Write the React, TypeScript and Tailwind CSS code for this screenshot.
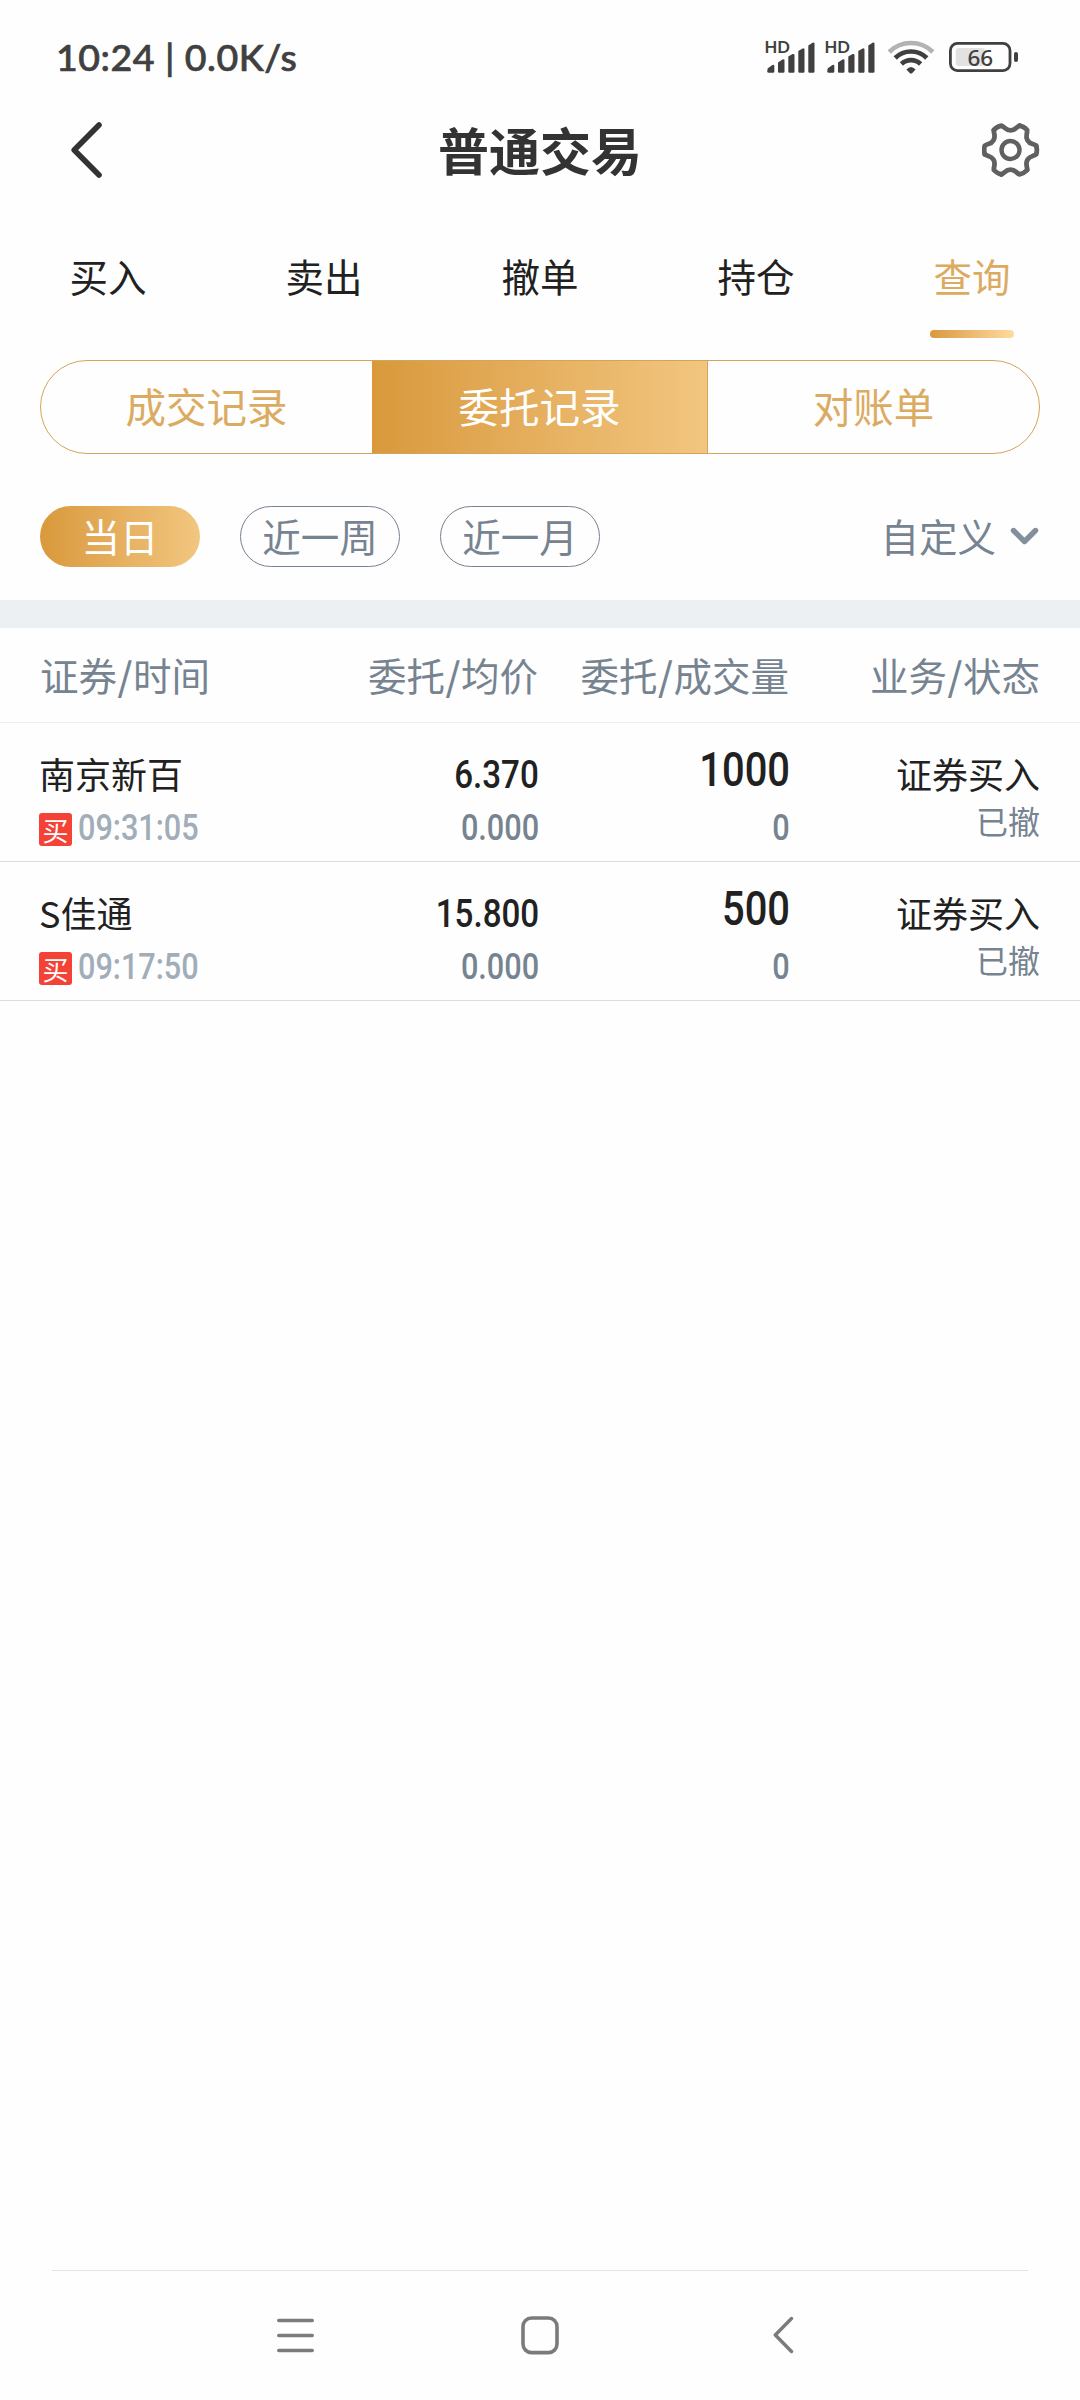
import React from "react";

const CJK = "font-['Noto_Sans_CJK_SC',sans-serif]";

function Signal() {
  return (
    <svg width="52" height="50" viewBox="0 -8 52 50" fill="#404040">
      <text x="-0.6" y="12.7" fontSize="16.2" fontWeight="700" fontFamily="Lato, sans-serif" textLength="25.4" lengthAdjust="spacingAndGlyphs">
        HD
      </text>
      <path d="M2.6 28.6 L7 25.2 Q9.3 24 9.3 26 V31.4 Q9.3 32.7 8 32.7 H3.7 Q2.3 32.7 2.3 31.2 Z" />
      <path d="M13 22.4 L17.5 19.6 Q19.5 18.8 19.5 20.8 V31.4 Q19.5 32.7 18.3 32.7 H14.2 Q13 32.7 13 31.4 Z" />
      <path d="M23.3 16.6 L27.6 14.1 Q29.5 13.4 29.5 15.4 V31.4 Q29.5 32.7 28.3 32.7 H24.5 Q23.3 32.7 23.3 31.4 Z" />
      <path d="M33.3 10.9 L37.6 8.4 Q39.5 7.8 39.5 9.8 V31.4 Q39.5 32.7 38.3 32.7 H34.5 Q33.3 32.7 33.3 31.4 Z" />
      <path d="M43.3 5.6 L47.6 2.8 Q49.5 2 49.5 4 V31.4 Q49.5 32.7 48.3 32.7 H44.5 Q43.3 32.7 43.3 31.4 Z" />
    </svg>
  );
}

function Wifi() {
  return (
    <svg width="48" height="34" viewBox="0 0 48 34" fill="none" strokeWidth="4.6">
      <path d="M2.2 12 A31 31 0 0 1 45.8 12" stroke="#b3b3b3" />
      <path d="M8.2 18 A22.5 22.5 0 0 1 39.8 18" stroke="#404040" />
      <path d="M14.4 24 A13.8 13.8 0 0 1 33.6 24" stroke="#404040" />
      <path d="M19.4 29.4 Q24 24.4 28.6 29.4 L25.3 33 Q24 34 22.7 33 Z" fill="#404040" stroke="none" />
    </svg>
  );
}

function Battery() {
  return (
    <svg width="70" height="46" viewBox="0 -8 70 46">
      <rect x="6.8" y="6" width="29" height="18" rx="3" fill="#e2e2e2" />
      <rect x="1.4" y="1.4" width="59.6" height="27.2" rx="7" fill="none" stroke="#404040" strokeWidth="2.8" />
      <rect x="65" y="10" width="4" height="10" rx="2" fill="#404040" />
      <text x="31.3" y="23.5" fontSize="22.5" fontFamily="Noto Sans, sans-serif" fontWeight="500" textAnchor="middle" fill="#404040">
        66
      </text>
    </svg>
  );
}

function Gear() {
  return (
    <svg width="58" height="56" viewBox="-28.5 -28 58 56" fill="none" stroke="#606060" strokeWidth="4.8" strokeLinejoin="round" strokeLinecap="round">
      {[0, 60, 120, 180, 240, 300].map((a) => (
        <path
          key={a}
          transform={`rotate(${a})`}
          d="M9 -24.4 C5.5 -22.8 5 -19.6 0 -19.6 C-5 -19.6 -5.5 -22.8 -9 -24.4 Q-13.6 -23.4 -16.6 -20"
        />
      ))}
      <circle r="9" strokeWidth="4.4" />
    </svg>
  );
}

const tabs = ["买入", "卖出", "撤单", "持仓", "查询"];

const orders = [
  { name: "南京新百", time: "09:31:05", price: "6.370", avg: "0.000", qty: "1000", filled: "0", type: "证券买入", status: "已撤" },
  { name: "S佳通", time: "09:17:50", price: "15.800", avg: "0.000", qty: "500", filled: "0", type: "证券买入", status: "已撤" },
];

const columns = "grid grid-cols-[260px_238px_251px_251px] px-10";
const numRight = "-mr-px block w-max self-end origin-right scale-x-[0.84] font-['Roboto',sans-serif]";

// Column caption such as "证券/时间", with the slash spaced a little wider than the glyph.
function Caption({ a, b }: { a: string; b: string }) {
  return (
    <span>
      {a}
      <span className="px-[0.5px] font-medium">/</span>
      {b}
    </span>
  );
}

export default function App() {
  return (
    <div className={`flex h-[2400px] w-[1080px] flex-col overflow-hidden bg-[#fefefe] text-[#212121] ${CJK}`}>
      <div className="flex h-[114px] shrink-0 items-center justify-between pl-[56px] pr-[61px]">
        <div className="text-[37.5px] leading-[46px] font-medium tracking-[0.5px] whitespace-pre text-[#404040] [-webkit-text-stroke:0.7px_#404040] font-['Lato',sans-serif]">
          10:24 | 0.0K/s
        </div>
        <div className="flex items-center">
          <Signal />
          <div className="w-2" />
          <Signal />
          <div className="w-[10px]" />
          <Wifi />
          <div className="w-[14px]" />
          <Battery />
        </div>
      </div>

      <div className="grid h-[72px] shrink-0 grid-cols-[1fr_auto_1fr] items-center pl-[40px] pr-[40px]">
        <svg className="ml-[30px]" width="59" height="58" viewBox="0 0 59 58" fill="none" stroke="#333" strokeWidth="5.6" strokeLinecap="round" strokeLinejoin="round">
          <path d="M29 4 L4.2 29 L29 54" />
        </svg>
        <h1 className="pb-[2px] text-[51px] leading-[60px] font-bold text-[#333]">普通交易</h1>
        <div className="flex justify-end">
          <Gear />
        </div>
      </div>

      <nav className="grid h-[174px] shrink-0 grid-cols-5 pt-[66px]">
        {tabs.map((t) => (
          <div key={t} className={t === "查询" ? "flex flex-col items-center text-[#dcab62]" : "flex flex-col items-center"}>
            <span className="text-[38.5px] leading-[46px]">{t}</span>
            {t === "查询" && <span className="mt-[32px] h-2 w-[84px] rounded-full bg-linear-to-r from-[#d9993b] to-[#ffdb9f]" />}
          </div>
        ))}
      </nav>

      <div className="mx-10 grid h-[94px] shrink-0 grid-cols-[331px_335px_332px] overflow-hidden rounded-full border border-[#d3a55c] text-[40.5px] text-[#dcab62]">
        <div className="flex items-center justify-center pb-[1px]">成交记录</div>
        <div className="-my-px flex items-center justify-center bg-linear-to-r from-[#d9993b] to-[#f2c67f] pb-[1px] text-white">委托记录</div>
        <div className="flex items-center justify-center border-l border-[#d3a55c] pb-[1px]">对账单</div>
      </div>

      <div className="flex h-[146px] shrink-0 items-start gap-10 px-10 pt-[52px] text-[38.5px] text-[#768390]">
        <div className="flex h-[61px] w-40 items-center justify-center rounded-full bg-linear-to-r from-[#d9993b] to-[#f2c67f] pb-[2px] text-white">当日</div>
        <div className="flex h-[61px] w-40 items-center justify-center rounded-full border border-[#768390] pb-[2px]">近一周</div>
        <div className="flex h-[61px] w-40 items-center justify-center rounded-full border border-[#768390] pb-[2px]">近一月</div>
        <div className="ml-auto flex h-[61px] items-center gap-[14px]">
          <span className="pb-[2px]">自定义</span>
          <svg className="mr-px" width="29" height="20" viewBox="0 0 29 20" fill="none" stroke="#838f9b" strokeWidth="5.4" strokeLinecap="round" strokeLinejoin="round">
            <path d="M3.5 3.5 L14.5 14.5 L25.5 3.5" />
          </svg>
        </div>
      </div>

      <div className="h-7 shrink-0 bg-[#ecf0f3]" />

      <div className={`${columns} h-[95px] shrink-0 border-b border-[#eeeeee] pt-[23px] text-[38.5px] leading-[46px] whitespace-nowrap text-[#768390]`}>
        <div><Caption a="证券" b="时间" /></div>
        <div className="text-right"><Caption a="委托" b="均价" /></div>
        <div className="text-right"><Caption a="委托" b="成交量" /></div>
        <div className="text-right"><Caption a="业务" b="状态" /></div>
      </div>

      {orders.map((o) => (
        <div key={o.time} className={`${columns} h-[139px] shrink-0 border-b border-[#dcdcdc]`}>
          <div className="flex flex-col pt-[30px]">
            <span className="-ml-px text-[36px] leading-[40px]">{o.name}</span>
            <div className="mt-[15px] -ml-px flex h-10 items-center">
              <span className="mt-[3px] flex h-[33px] w-[33px] items-center justify-center rounded-[3px] bg-[#f44336] text-[26px] leading-[33px] text-white">买</span>
              <span className="ml-[6px] block origin-left scale-x-[0.84] text-[36.5px] leading-[40px] font-medium text-[#a1adb9] font-['Roboto',sans-serif]">{o.time}</span>
            </div>
          </div>
          <div className="flex flex-col pt-[32px]">
            <span className={`${numRight} text-[39.5px] leading-[40px] font-medium`}>{o.price}</span>
            <span className={`${numRight} mt-[13px] text-[36.5px] leading-[40px] font-medium text-[#768390]`}>{o.avg}</span>
          </div>
          <div className="flex flex-col pt-[23px]">
            <span className={`${numRight} text-[47.5px] leading-[48px] font-medium`}>{o.qty}</span>
            <span className={`${numRight} mt-[14px] text-[36.5px] leading-[40px] font-medium text-[#768390]`}>{o.filled}</span>
          </div>
          <div className="flex flex-col items-end pt-[30px]">
            <span className="text-[36px] leading-[40px]">{o.type}</span>
            <span className="mt-[9px] text-[32px] leading-[36px] text-[#768390]">{o.status}</span>
          </div>
        </div>
      ))}

      <div className="mx-[52px] mt-auto flex h-[130px] shrink-0 items-start justify-between border-t border-[#e4e4e4] pl-[225px] pr-[225px] pt-[44px]">
        <svg width="37" height="42" viewBox="0 0 37 42" stroke="#7b7b7b" strokeWidth="3.6" strokeLinecap="round">
          <path d="M1.8 5.5 H35.2 M1.8 20.5 H35.2 M1.8 35.5 H35.2" />
        </svg>
        <svg className="-ml-[8px]" width="38" height="42" viewBox="0 0 38 42" fill="none" stroke="#7b7b7b" strokeWidth="3.6">
          <rect x="2" y="3" width="34" height="34.6" rx="8.5" />
        </svg>
        <svg width="30" height="42" viewBox="0 0 30 42" fill="none" stroke="#7b7b7b" strokeWidth="3.4" strokeLinecap="round" strokeLinejoin="round">
          <path d="M18.5 3.5 L2.3 20 L18.5 36.5" />
        </svg>
      </div>
    </div>
  );
}
